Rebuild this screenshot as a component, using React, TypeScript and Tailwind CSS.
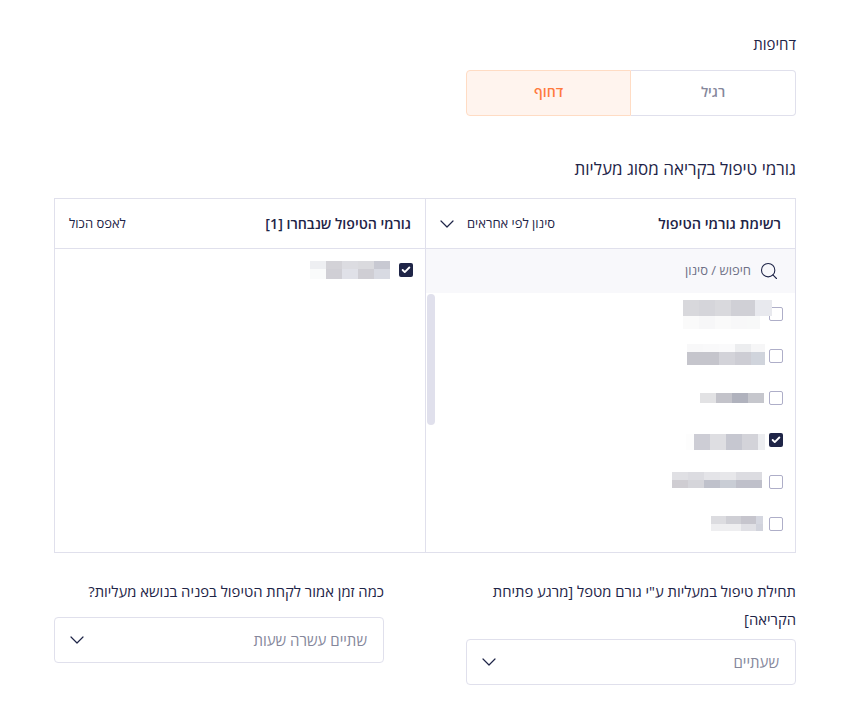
import { Check, ChevronDown, Search } from 'lucide-react'

type Mosaic = { rows: { h: number; cells: [number, string][] }[]; className?: string }

const LIST_ROWS: Mosaic[] = [
  {
    className: '-mr-[7px]',
    rows: [
      { h: 16, cells: [[16, '#d8d8dc'], [16, '#d5d5da'], [16, '#d9d9dd'], [16, '#d0d0d6'], [8, '#d0d0d6'], [17, '#e8e9ee']] },
      { h: 13, cells: [[16, '#fafafa'], [16, '#f7f7f8'], [16, '#fafafa'], [16, '#f8f8f9'], [13, '#f8f9f9'], [9, '#ffffff']] },
    ],
  },
  {
    className: '-mt-[3px]',
    rows: [
      { h: 8, cells: [[16, '#f8f8f9'], [16, '#f9f9fa'], [16, '#fafafb'], [16, '#ecedef'], [14, '#f6f6f7']] },
      { h: 13, cells: [[16, '#c5c5cc'], [16, '#c5c5cc'], [16, '#d3d3d9'], [16, '#cdcdd4'], [14, '#d0d4dc']] },
    ],
  },
  {
    className: 'mr-[1px]',
    rows: [{ h: 10, cells: [[16, '#e2e2e4'], [16, '#c3c3ca'], [16, '#b0b2bd'], [16, '#c6c7cd']] }],
  },
  {
    className: 'mt-[4px]',
    rows: [{ h: 16, cells: [[8, '#fdfdfd'], [16, '#cdcdd5'], [16, '#dedee2'], [16, '#c6c7d0'], [16, '#d3d3d9'], [7, '#ecedf0']] }],
  },
  {
    className: '-mt-[4px] mr-[3px]',
    rows: [
      { h: 8, cells: [[16, '#e0e0e4'], [16, '#dcdce1'], [16, '#e4e4e8'], [16, '#e7e7ea'], [16, '#dcdce1'], [10, '#dcdce1']] },
      { h: 8, cells: [[16, '#cfcdd2'], [16, '#d5d5da'], [16, '#bfc1cb'], [16, '#c9cdd5'], [16, '#bfc0ca'], [10, '#bfc0ca']] },
    ],
  },
  {
    className: '-mt-[1px] mr-[2px]',
    rows: [
      { h: 8, cells: [[15, '#dcdce0'], [15, '#cfcfd5'], [15, '#c6c5cd'], [7, '#d5d7e0']] },
      { h: 7, cells: [[15, '#eeeef0'], [15, '#eeeef0'], [15, '#e0e0e5'], [7, '#d1d3dc']] },
    ],
  },
]

const SELECTED: Mosaic = {
  rows: [
    { h: 8, cells: [[16, '#eeeff2'], [16, '#d3d2d7'], [16, '#dcdce1'], [16, '#dadade'], [16, '#c8c9d2']] },
    { h: 10, cells: [[16, '#fafbfb'], [16, '#d0cfd5'], [16, '#e0e1e8'], [16, '#cfced4'], [16, '#d8dae2']] },
  ],
}

function Blur({ rows, className = '' }: Mosaic) {
  return (
    <div dir="ltr" className={`flex flex-col items-start ${className}`}>
      {rows.map((row, i) => (
        <div key={i} className="flex">
          {row.cells.map(([w, color], j) => (
            <div key={j} style={{ width: w, height: row.h, background: color }} />
          ))}
        </div>
      ))}
    </div>
  )
}

function Box({ checked }: { checked?: boolean }) {
  if (checked) {
    return (
      <div className="w-[14px] h-[14px] shrink-0 rounded-[2px] bg-[#1f2547] flex items-center justify-center">
        <Check size={10} strokeWidth={4.5} className="text-white" />
      </div>
    )
  }
  return <div className="w-[14px] h-[14px] shrink-0 rounded-[2px] border border-[#aeaec8] bg-white" />
}

function SelectBox({ value }: { value: string }) {
  return (
    <div className="h-[46px] rounded-[4px] border border-[#e0e0ec] flex items-center justify-between pr-[16px] pl-[10px]">
      <span className="text-[15px] text-[#85879b]">{value}</span>
      <ChevronDown size={24} strokeWidth={1.2} className="text-[#1e2447]" />
    </div>
  )
}

export default function App() {
  return (
    <div
      dir="rtl"
      className="w-[844px] h-[714px] overflow-hidden bg-white pr-[48px] pl-[54px] pt-[34px] text-[#1e2447] font-['Open_Sans','Liberation_Sans',sans-serif]"
    >
      <div className="text-[15px] leading-[20px] font-medium">דחיפות</div>

      <div className="mt-[16px] w-[330px] h-[46px] flex text-[14px] leading-[18px] font-semibold">
        <div className="flex-1 flex items-center justify-center pb-[2px] rounded-r-[4px] border border-l-0 border-[#e0e0ec] text-[#85879b]">
          רגיל
        </div>
        <div className="w-[165px] flex items-center justify-center pb-[2px] rounded-l-[4px] border border-[#ffdcc4] bg-[#fff4ee] text-[#ff7a3d]">
          דחוף
        </div>
      </div>

      <div className="mt-[41px] text-[17px] leading-[24px] font-medium">גורמי טיפול בקריאה מסוג מעליות</div>

      <div className="mt-[17px] h-[355px] border border-[#e0e0ec] flex">
        <div className="w-[370px] shrink-0 border-l border-[#e0e0ec] flex flex-col relative">
          <div className="h-[50px] shrink-0 border-b border-[#e0e0ec] flex items-center justify-between pr-[14px] pl-[9px]">
            <span className="text-[14.5px] font-semibold">רשימת גורמי הטיפול</span>
            <div className="flex items-center gap-[8px]">
              <span className="text-[13px]">סינון לפי אחראים</span>
              <ChevronDown size={24} strokeWidth={1.2} />
            </div>
          </div>
          <div className="h-[44px] shrink-0 bg-[#f8f8fb] flex items-center gap-[8px] pr-[16px]">
            <Search size={20} strokeWidth={1.3} />
            <span className="text-[13px] text-[#6e7086]">חיפוש / סינון</span>
          </div>
          {LIST_ROWS.map((row, i) => (
            <div key={i} className="h-[42px] shrink-0 flex items-center gap-[4px] pr-[12px]">
              <Box checked={i === 3} />
              <Blur {...row} />
            </div>
          ))}
          <div className="absolute left-[1px] top-[95px] w-[8px] h-[131px] rounded-[4px] bg-[#e0e0ec]" />
        </div>

        <div className="flex-1 flex flex-col">
          <div className="h-[50px] shrink-0 border-b border-[#e0e0ec] flex items-center justify-between pr-[14px] pl-[14px]">
            <span className="text-[14.2px] font-semibold">גורמי הטיפול שנבחרו [1]</span>
            <span className="text-[13px]">לאפס הכול</span>
          </div>
          <div className="h-[42px] flex items-center gap-[9px] pr-[12px]">
            <Box checked />
            <Blur {...SELECTED} />
          </div>
        </div>
      </div>

      <div className="mt-[24px] flex justify-between items-start">
        <div className="w-[330px]">
          <div className="text-[14.8px] leading-[28px] mb-[6px]">תחילת טיפול במעליות ע"י גורם מטפל [מרגע פתיחת הקריאה]</div>
          <SelectBox value="שעתיים" />
        </div>
        <div className="w-[330px]">
          <div className="text-[14.8px] leading-[28px] mb-[12px]">כמה זמן אמור לקחת הטיפול בפניה בנושא מעליות?</div>
          <SelectBox value="שתיים עשרה שעות" />
        </div>
      </div>
    </div>
  )
}
